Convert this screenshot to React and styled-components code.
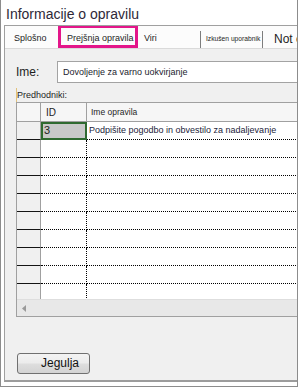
import React from "react";
import styled, { createGlobalStyle } from "styled-components";

const GlobalStyle = createGlobalStyle`
  html, body {
    margin: 0;
    padding: 0;
    background: #ffffff;
  }
  body {
    font-family: "Liberation Sans", Arial, sans-serif;
    color: #1e1e1e;
  }
`;

const Window = styled.div`
  width: 298px;
  height: 387px;
  box-sizing: border-box;
  border: 1px solid #8c8c8c;
  border-top: none;
  background: #ffffff;
  display: flex;
  flex-direction: column;
  overflow: hidden;
`;

const Title = styled.div`
  height: 25px;
  box-sizing: border-box;
  padding: 6px 0 0 5px;
  font-size: 14px;
  line-height: 16px;
  color: #2e2838;
  white-space: nowrap;
`;

const Body = styled.div`
  flex: 1;
  margin: 0 0 4px 3px;
  border-top: 1px solid #a0a0a0;
  border-left: 1px solid #a0a0a0;
  border-bottom: 2px solid #9c9c9c;
  display: flex;
  flex-direction: column;
  min-height: 0;
`;

const TabStrip = styled.div`
  height: 23px;
  box-sizing: border-box;
  display: flex;
  align-items: flex-end;
  background: #fcfcfc;
  border-bottom: 1px solid #dadada;
  white-space: nowrap;
  overflow: hidden;
`;

const Tab = styled.div`
  box-sizing: border-box;
  flex: 0 0 ${(p) => p.$width}px;
  height: ${(p) => (p.$divider ? 17 : 23)}px;
  padding-left: ${(p) => p.$pad}px;
  padding-top: ${(p) => (p.$marked ? 4 : p.$divider ? 2 : 7)}px;
  font-size: ${(p) => p.$size || 9}px;
  line-height: 12px;
  color: #1e1e1e;
  border: ${(p) => (p.$marked ? "3px solid #e3168a" : "none")};
  border-left: ${(p) =>
    p.$marked ? "3px solid #e3168a" : p.$divider ? "1px solid #7d7d7d" : "none"};
`;

const Panel = styled.div`
  flex: 1;
  background: #f0f0f0;
  padding: 12px 0 0 11px;
  display: flex;
  flex-direction: column;
  min-height: 0;
`;

const FieldRow = styled.div`
  display: flex;
  align-items: center;
  height: 22px;
`;

const FieldLabel = styled.label`
  flex: 0 0 41px;
  font-size: 12px;
  line-height: 14px;
  color: #1e1e1e;
`;

const TextInput = styled.div`
  flex: 1;
  height: 22px;
  box-sizing: border-box;
  border: 1px solid #a3a3a3;
  border-right: none;
  background: #ffffff;
  padding-left: 5px;
  font-size: 9px;
  line-height: 20px;
  color: #1b1b2e;
  white-space: nowrap;
`;

const SectionLabel = styled.div`
  margin-top: 5px;
  align-self: flex-start;
  border-left: 1px solid #e2c27a;
  height: 14px;
  font-size: 9px;
  line-height: 14px;
  color: #1e1e1e;
`;

const Grid = styled.div`
  width: 300px;
  height: 215px;
  box-sizing: border-box;
  border: 1px solid #a0a0a0;
  border-right: none;
  background: #ffffff;
  display: flex;
  flex-direction: column;
`;

const HeaderRow = styled.div`
  display: grid;
  grid-template-columns: 24px 46px 1fr;
  height: 19px;
  box-sizing: border-box;
  background: #f6f6f6;
  border-bottom: 1px solid #a0a0a0;
`;

const HeaderCell = styled.div`
  border-right: 1px solid #a0a0a0;
  padding-left: ${(p) => p.$pad || 0}px;
  font-size: ${(p) => p.$size || 9}px;
  line-height: 19px;
  color: #1e1e1e;
  white-space: nowrap;
`;

const Rows = styled.div`
  flex: 1;
  overflow: hidden;
  min-height: 0;
`;

const Row = styled.div`
  display: grid;
  grid-template-columns: 24px 46px 1fr;
  height: 18px;
`;

const RowHead = styled.div`
  background: #f0f0f0;
  border-right: 1px solid #a0a0a0;
  border-bottom: 1px solid #141414;
`;

const IdCell = styled.div`
  box-sizing: border-box;
  border-right: 1px dotted #000000;
  border-bottom: 1px dotted #000000;
  padding-left: 3px;
  font-size: 11px;
  line-height: 17px;
  color: #222222;
  background: ${(p) => (p.$selected ? "#c9c9c9" : "transparent")};
  outline: ${(p) => (p.$selected ? "2px solid #2f6a30" : "none")};
  outline-offset: -2px;
`;

const NameCell = styled.div`
  border-bottom: 1px dotted #000000;
  padding-left: 2px;
  font-size: 9px;
  line-height: 17px;
  color: #1b1b3a;
  white-space: nowrap;
`;

const ScrollBar = styled.div`
  height: 17px;
  box-sizing: border-box;
  background: #e8e8e8;
  border-top: 1px solid #dedede;
  display: flex;
  align-items: center;
  padding-left: 5px;
`;

const Button = styled.button`
  margin: 36px 0 0 1px;
  width: 73px;
  height: 21px;
  box-sizing: border-box;
  border: 1px solid #707070;
  border-radius: 3px;
  background: linear-gradient(#f3f3f3 0%, #ececec 48%, #dedede 52%, #d3d3d3 100%);
  padding: 0 0 0 23px;
  text-align: left;
  font-family: "Liberation Sans", Arial, sans-serif;
  font-size: 12px;
  line-height: 19px;
  color: #111111;
`;

const rows = [
  { id: "3", name: "Podpišite pogodbo in obvestilo za nadaljevanje" },
  ...Array.from({ length: 9 }, () => ({ id: "", name: "" })),
];

export default function App() {
  return (
    <>
      <GlobalStyle />
      <Window>
        <Title>Informacije o opravilu</Title>
        <Body>
          <TabStrip>
            <Tab $width={53} $pad={9}>Splošno</Tab>
            <Tab $width={80} $pad={6} $marked>Prejšnja opravila</Tab>
            <Tab $width={62} $pad={6}>Viri</Tab>
            <Tab $width={62} $pad={5} $divider $size={6.7}>Izkušen uporabnik</Tab>
            <Tab $width={34} $pad={11} $divider $size={12}>Not e</Tab>
          </TabStrip>
          <Panel>
            <FieldRow>
              <FieldLabel>Ime:</FieldLabel>
              <TextInput>Dovoljenje za varno uokvirjanje</TextInput>
            </FieldRow>
            <SectionLabel>Predhodniki:</SectionLabel>
            <Grid>
              <HeaderRow>
                <HeaderCell />
                <HeaderCell $pad={5} $size={10}>ID</HeaderCell>
                <HeaderCell $pad={4} $size={8.5}>Ime opravila</HeaderCell>
              </HeaderRow>
              <Rows>
                {rows.map((r, i) => (
                  <Row key={i}>
                    <RowHead />
                    <IdCell $selected={i === 0}>{r.id}</IdCell>
                    <NameCell>{r.name}</NameCell>
                  </Row>
                ))}
              </Rows>
              <ScrollBar>
                <svg width="4" height="7" viewBox="0 0 4 7">
                  <polygon points="4,0 0,3.5 4,7" fill="#9a9a9a" />
                </svg>
              </ScrollBar>
            </Grid>
            <Button>Jegulja</Button>
          </Panel>
        </Body>
      </Window>
    </>
  );
}
